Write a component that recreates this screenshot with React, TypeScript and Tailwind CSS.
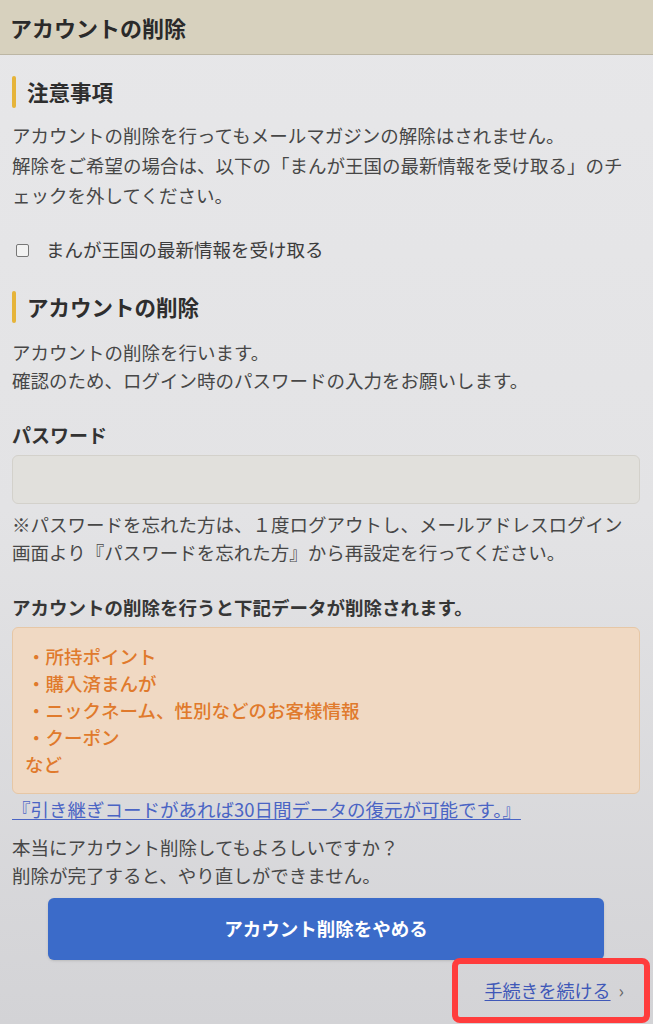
import React from "react";

const DELETED_ITEMS = ["・所持ポイント", "・購入済まんが", "・ニックネーム、性別などのお客様情報", "・クーポン"];

function SectionHeading({ title }: { title: string }) {
  return (
    <div className="flex h-[32px] items-center">
      <span className="h-full w-[4px] rounded-sm bg-[#e6b43a]" />
      <h2 className="ml-[11px] text-[21.5px] font-bold leading-[32px] text-[#2e2e2e]">{title}</h2>
    </div>
  );
}

export default function App() {
  return (
    <div
      className="min-h-[1024px] w-full bg-gradient-to-b from-[#e7e7e9] via-[#e3e3e5] to-[#d3d3d6] text-[#474747]"
      style={{ fontFamily: '"Noto Sans CJK JP", "Noto Sans", sans-serif' }}
    >
      {/* Header */}
      <header className="flex h-[55px] items-center border-b border-[#bcb6a4] bg-[#d7d1be] px-[10px]">
        <h1 className="text-[22px] font-bold text-[#2a2a2a]">アカウントの削除</h1>
      </header>

      <main className="pl-[12px] pr-[13px] text-[18.5px]">
        {/* 注意事項 */}
        <div className="mt-[21px]">
          <SectionHeading title="注意事項" />
        </div>
        <p className="mt-[12px] leading-[30px]">
          <span className="block whitespace-nowrap">アカウントの削除を行ってもメールマガジンの解除はされません。</span>
          <span className="block whitespace-nowrap">解除をご希望の場合は、以下の「まんが王国の最新情報を受け取る」のチ</span>
          <span className="block whitespace-nowrap">ェックを外してください。</span>
        </p>

        <label className="mt-[25px] flex h-[30px] items-center">
          <span className="ml-[4px] h-[13px] w-[13px] rounded-[2px] border border-[#777] bg-[#f2f2f2]" />
          <span className="ml-[17px] text-[#3c3c3c]">まんが王国の最新情報を受け取る</span>
        </label>

        {/* アカウントの削除 */}
        <div className="mt-[26px]">
          <SectionHeading title="アカウントの削除" />
        </div>
        <p className="mt-[15px] leading-[28px]">
          アカウントの削除を行います。
          <br />
          確認のため、ログイン時のパスワードの入力をお願いします。
        </p>

        <div className="mt-[27px] text-[19px] font-bold leading-[28px] text-[#333]">パスワード</div>
        <div className="mt-[6px] h-[49px] rounded-md border border-[#d3d1cb] bg-[#e1e0dc]" />

        <p className="mt-[6px] leading-[28px]">
          <span className="block whitespace-nowrap">※パスワードを忘れた方は、１度ログアウトし、メールアドレスログイン</span>
          <span className="block whitespace-nowrap">画面より『パスワードを忘れた方』から再設定を行ってください。</span>
        </p>

        <div className="mt-[27px] font-bold leading-[28px] text-[#363636]">
          アカウントの削除を行うと下記データが削除されます。
        </div>

        <div className="mt-[6px] rounded-md border border-[#e6c7a6] bg-[#f0d9c3] px-[12px] py-[15px] font-medium leading-[27px] text-[#e07a2c]">
          {DELETED_ITEMS.map((item) => (
            <div key={item} className="pl-[2px]">
              {item}
            </div>
          ))}
          <div>など</div>
        </div>

        <a href="#" className="mt-[2px] block leading-[26px] text-[#4a64c4] underline underline-offset-2">
          『引き継ぎコードがあれば30日間データの復元が可能です。』
        </a>

        <p className="mt-[11px] leading-[28px]">
          本当にアカウント削除してもよろしいですか？
          <br />
          削除が完了すると、やり直しができません。
        </p>

        <button className="mx-auto mt-[9px] flex h-[62px] w-[556px] items-center justify-center rounded-md bg-[#3b6bc9] font-bold text-white shadow-sm">
          アカウント削除をやめる
        </button>

        <div className="mt-[-2px] flex justify-end">
          <div className="mr-[-10px] flex h-[65px] w-[198px] items-center justify-end rounded-lg border-[6px] border-[#ff3c3c] pr-[20px]">
            <a href="#" className="text-[18px] text-[#3f58b8] underline underline-offset-2">
              手続きを続ける
            </a>
            <span className="ml-[8px] text-[18px] text-[#666]">›</span>
          </div>
        </div>
      </main>
    </div>
  );
}
